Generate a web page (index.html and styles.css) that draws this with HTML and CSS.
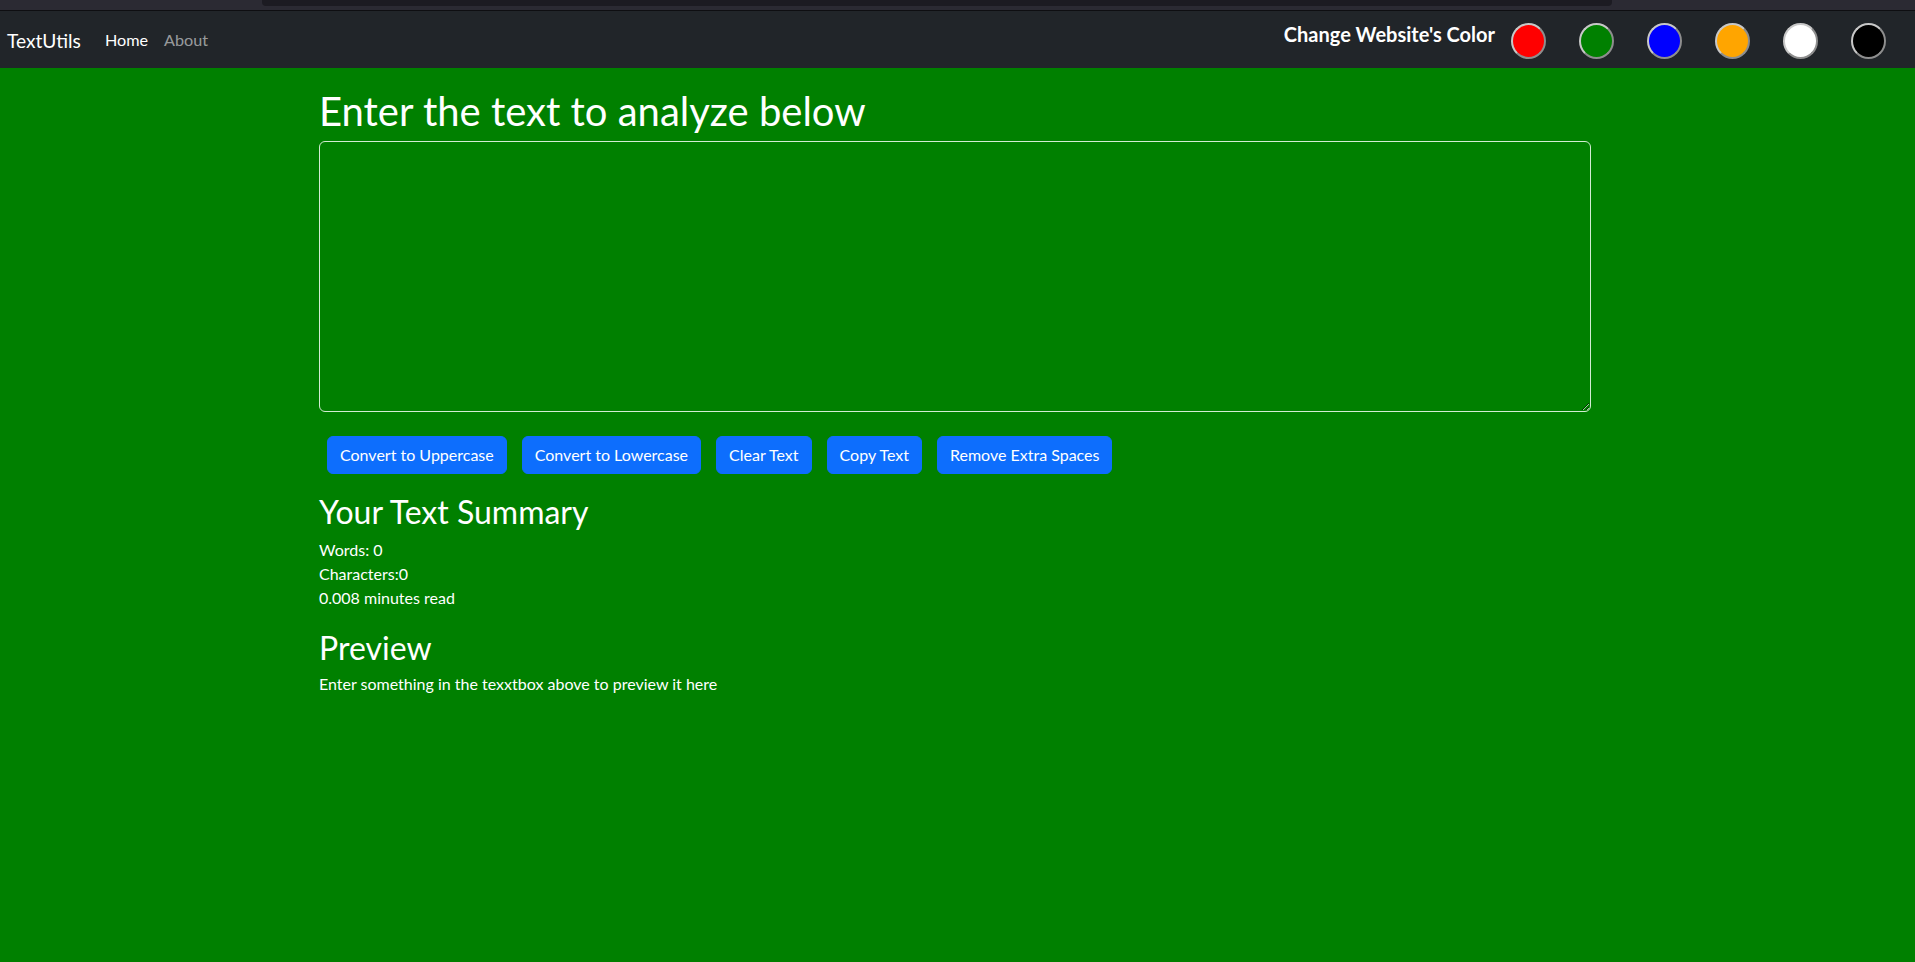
FILE: index.html
```html
<!DOCTYPE html>
<html lang="en">
<head>
<meta charset="utf-8">
<title>TextUtils</title>
<link rel="stylesheet" href="styles.css">
</head>
<body>
<div class="chrome"><div class="chrome-bar"></div></div>
<nav class="navbar">
  <a class="brand" href="#">TextUtils</a>
  <ul class="nav-links">
    <li><a class="nav-link active" href="#">Home</a></li>
    <li><a class="nav-link" href="#">About</a></li>
  </ul>
  <div class="spacer"></div>
  <h6 class="color-label">Change Website's Color</h6>
  <div class="swatches">
    <button class="swatch swatch-red" aria-label="red"></button>
    <button class="swatch swatch-green" aria-label="green"></button>
    <button class="swatch swatch-blue" aria-label="blue"></button>
    <button class="swatch swatch-orange" aria-label="orange"></button>
    <button class="swatch swatch-white" aria-label="white"></button>
    <button class="swatch swatch-black" aria-label="black"></button>
  </div>
</nav>
<main class="container">
  <h1 class="title">Enter the text to analyze below</h1>
  <textarea class="textbox" rows="8"></textarea>
  <div class="btn-row">
    <button class="btn">Convert to Uppercase</button>
    <button class="btn">Convert to Lowercase</button>
    <button class="btn">Clear Text</button>
    <button class="btn">Copy Text</button>
    <button class="btn">Remove Extra Spaces</button>
  </div>
  <section class="summary">
    <h2 class="sub">Your Text Summary</h2>
    <p class="line">Words: 0</p>
    <p class="line">Characters:0</p>
    <p class="line">0.008 minutes read</p>
  </section>
  <section class="preview">
    <h2 class="sub">Preview</h2>
    <p class="line">Enter something in the texxtbox above to preview it here</p>
  </section>
</main>
</body>
</html>
```

FILE: styles.css
```css
* { box-sizing: border-box; }
html, body { margin: 0; padding: 0; }
body {
  background: #008000;
  color: #ffffff;
  font-family: "Lato", "Noto Sans", sans-serif;
  font-size: 16px;
  line-height: 1.5;
  min-height: 962px;
}
.chrome {
  height: 11px;
  background: #2b2a33;
  border-bottom: 1px solid #0e0e11;
}
.chrome-bar {
  margin-left: 262px;
  width: 1350px;
  height: 6px;
  background: #1c1b22;
  border-radius: 0 0 4px 4px;
}
.navbar {
  display: flex;
  align-items: center;
  height: 57px;
  background: #212529;
  padding: 2px 29px 0 7px;
}
.brand {
  color: #ffffff;
  text-decoration: none;
  font-size: 19.2px;
  line-height: 30px;
  margin-right: 16px;
}
.nav-links {
  display: flex;
  list-style: none;
  margin: 0;
  padding: 0;
}
.nav-link {
  display: block;
  padding: 8px 8px;
  color: rgba(255, 255, 255, 0.55);
  text-decoration: none;
  font-size: 16.2px;
}
.nav-link.active { color: #ffffff; }
.spacer { flex: 1; }
.color-label {
  margin: 0 16px 13px 0;
  font-size: 20px;
  font-weight: 700;
  line-height: 1.2;
  color: #ffffff;
}
.swatches {
  display: flex;
  gap: 33px;
}
.swatch {
  width: 35px;
  height: 36px;
  border-radius: 50%;
  border: 2px solid #c8c8c8;
  border-right-color: #8e8e8e;
  border-bottom-color: #8e8e8e;
  padding: 0;
}
.swatch-red { background: #ff0000; }
.swatch-green { background: #008000; }
.swatch-blue { background: #0000ff; }
.swatch-orange { background: #ffa500; }
.swatch-white { background: #ffffff; }
.swatch-black { background: #000000; }
.container {
  width: 1272px;
  margin-left: 319px;
  padding-top: 19px;
}
.title {
  margin: 0 0 6px;
  font-size: 40px;
  font-weight: 400;
  line-height: 1.2;
}
.textbox {
  display: block;
  width: 1272px;
  height: 271px;
  background: #008000;
  color: #ffffff;
  border: 1px solid #d2ecd2;
  border-radius: 6px;
  font: inherit;
  padding: 6px 12px;
}
.btn-row {
  display: flex;
  gap: 15px;
  padding: 24px 8px 0;
}
.btn {
  background: #0d6efd;
  color: #ffffff;
  border: 1px solid #0d6efd;
  border-radius: 6px;
  font: inherit;
  font-size: 16px;
  line-height: 24px;
  padding: 6px 12px;
}
.summary { padding-top: 19px; }
.sub {
  margin: 0 0 7px;
  font-size: 32px;
  font-weight: 400;
  line-height: 1.2;
}
.line {
  margin: 0;
  font-size: 16px;
  line-height: 24px;
}
.preview { padding-top: 19px; }
.preview .sub { margin-bottom: 4px; }
```
